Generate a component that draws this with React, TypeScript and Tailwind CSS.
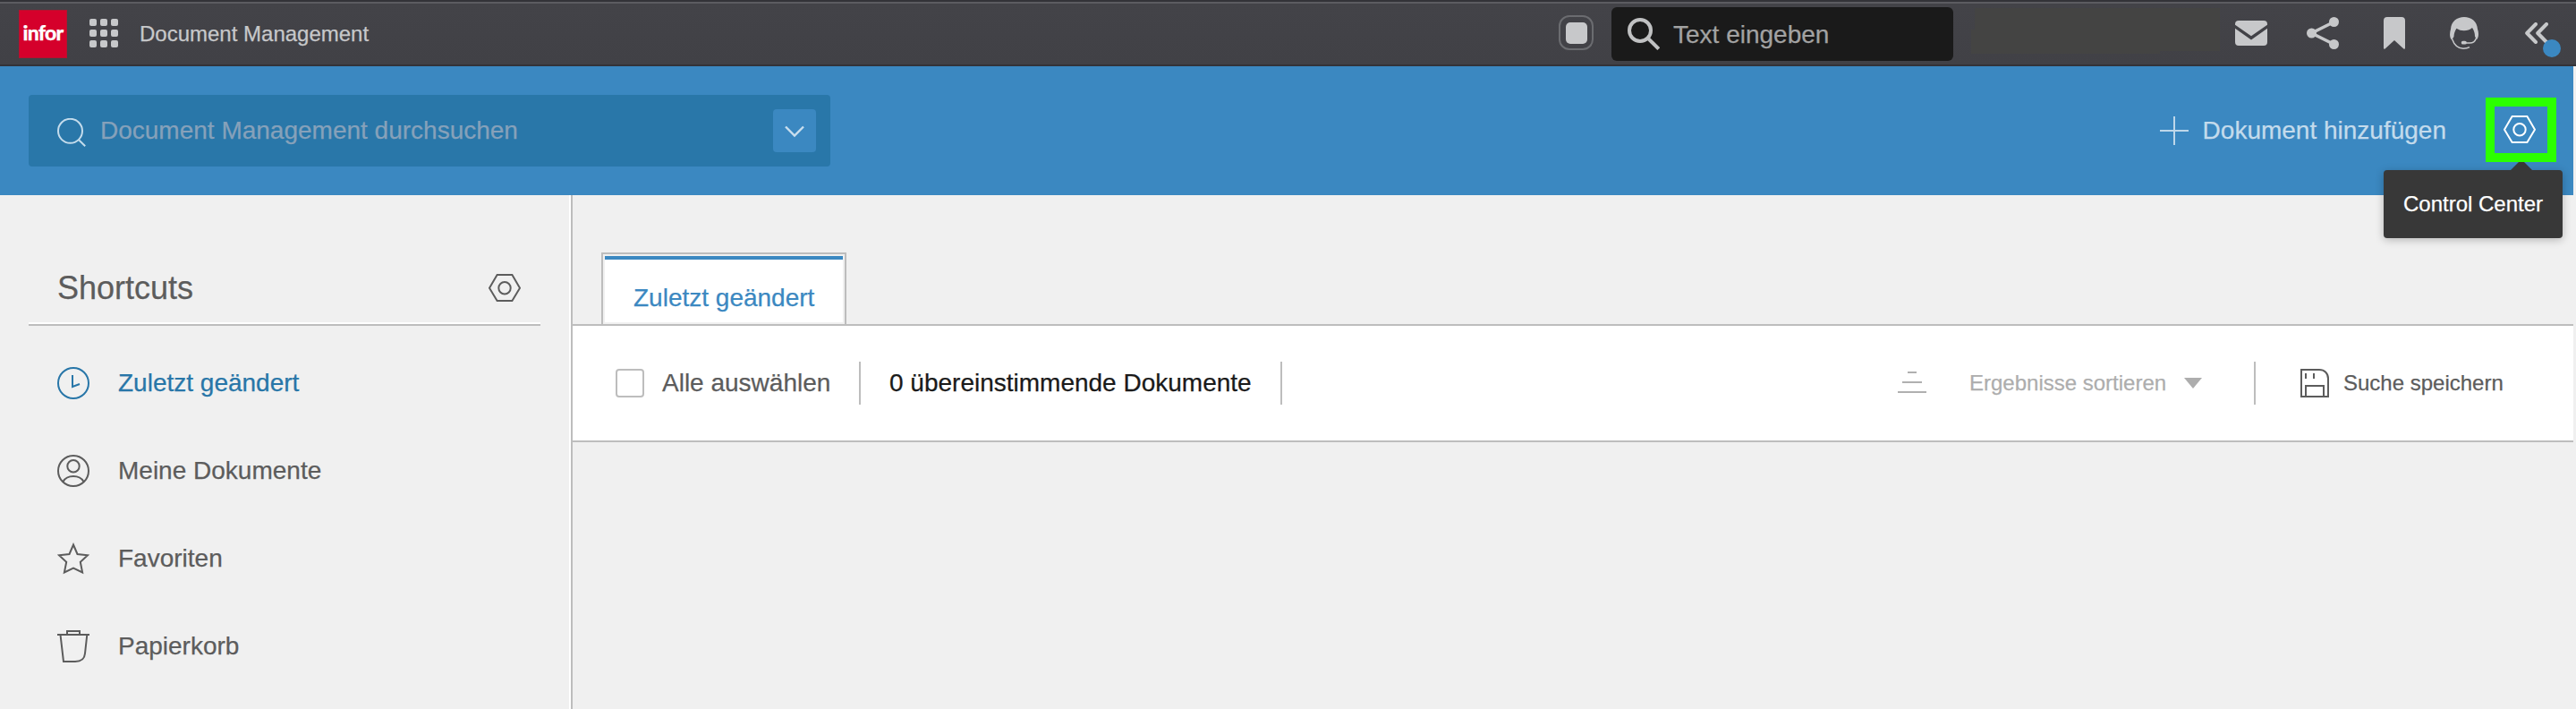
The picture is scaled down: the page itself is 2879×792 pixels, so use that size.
import type { ReactNode } from "react";

function HexNut({ className }: { className: string }) {
  return (
    <svg className={className} width="36" height="32" viewBox="0 0 36 32" fill="none" stroke="currentColor" strokeWidth="2">
      <path d="M9.6 1h16.8L35 15.8 26.4 30H9.6L1 15.8z" />
      <circle cx="18" cy="15.7" r="6.7" />
    </svg>
  );
}

function TopBar() {
  return (
    <header className="flex h-[74px] shrink-0 flex-col bg-[#333338]">
      <div className="mt-0.5 h-0.5 bg-[#5c5c61]" />
      <div className="flex h-[68px] items-start bg-gradient-to-b from-[#434348] to-[#414146]">
        <div className="ml-[21px] mt-[7px] flex h-[54px] w-[54px] items-center justify-center border border-[#b5122f] bg-[#d5002b]">
          <span className="mb-1 font-[Lato] text-[23px] font-black leading-none tracking-[-0.8px] text-white">infor</span>
        </div>
        <svg className="ml-[25px] mt-[17px]" width="32" height="32" viewBox="0 0 32 32" fill="#c7c8ca">
          {[0, 12, 24].map((y) =>
            [0, 12, 24].map((x) => <rect key={`${x}-${y}`} x={x} y={y} width="8" height="8" rx="2" />),
          )}
        </svg>
        <span className="ml-6 mt-[18px] whitespace-nowrap text-2xl leading-8 text-[#c7c8ca]">Document Management</span>

        <div className="ml-auto mt-[13px] flex h-[39px] w-[39px] items-center justify-center rounded-xl border-2 border-[#6b6c70]">
          <div className="h-6 w-6 rounded-[5px] bg-[#c7c8ca]" />
        </div>
        <div className="ml-5 mt-1 flex h-[60px] w-[382px] items-start rounded-md bg-[#1a1a1a]">
          <svg className="ml-[18px] mt-3" width="36" height="36" viewBox="0 0 36 36" fill="none" stroke="#c0c1c2" strokeWidth="4">
            <circle cx="14" cy="14" r="12" />
            <path d="M22.8 22.8 34.8 34.6" />
          </svg>
          <span className="ml-[15px] mt-[13px] whitespace-nowrap text-[28px] leading-9 text-[#a2a2a2]">Text eingeben</span>
        </div>
        <svg className="ml-5 mt-[5px]" width="278" height="51" viewBox="0 0 278 51" fill="#444443">
          <path d="M4 0h274v48h-67v3H0V24h4z" />
        </svg>

        <svg className="ml-[17px] mt-[19px]" width="36" height="28" viewBox="0 0 36 28" fill="#c7c8ca">
          <path d="M0 4Q0 0 4 0h28q4 0 4 4v.8L18 17.2 0 4.800z" />
          <path d="M0 8.800 18 21.600 36 8.800V24q0 4-4 4H4q-4 0-4-4z" />
        </svg>
        <svg className="ml-11 mt-[15px]" width="36" height="36" viewBox="0 0 36 36" fill="#c7c8ca" stroke="#c7c8ca">
          <path d="M30.500 5.500 5.500 18l25 12.500" fill="none" strokeWidth="3.600" />
          <circle cx="30.500" cy="5.500" r="5.500" stroke="none" />
          <circle cx="5.500" cy="18" r="5.500" stroke="none" />
          <circle cx="30.500" cy="30.500" r="5.500" stroke="none" />
        </svg>
        <svg className="ml-[50px] mt-[15px]" width="24" height="36" viewBox="0 0 24 36" fill="#c7c8ca">
          <path d="M0 4q0-4 4-4h16q4 0 4 4v30.500q0 1.800-1.600 1L12 26 1.600 35.500Q0 36.300 0 34.500z" />
        </svg>
        <svg className="ml-[50px] mt-[15px]" width="32" height="36" viewBox="0 0 32 36" fill="none" stroke="#c7c8ca">
          <path
            d="M2.200 25.500C-.5 23-.3 18 1 13.500 1.500 5 8 0 16 0s14.500 5 15 13.500C32.600 18 32.300 23 29.800 25.500L28 21.500c0-3.300-.9-6.500-3-9.500-4.500 4-12.500 4.300-17.500.7C5.500 15.500 4.700 18.500 4.500 22z"
            fill="#c7c8ca"
            stroke="none"
          />
          <path d="M2.500 24.500C5 31.500 9.500 35.200 15 35.200c2.800 0 4.800-.3 7-1.600" strokeWidth="1.500" />
          <path d="M29.300 24c-1.300 3.700-3.600 5-7 5H16" strokeWidth="1.500" />
          <rect x="12.800" y="26.700" width="6" height="3.900" rx="1.900" fill="#c7c8ca" stroke="none" />
        </svg>
        <div className="relative ml-[52px] mr-7 mt-[21px] h-6 w-[29px]">
          <svg width="29" height="24" viewBox="0 0 29 24" fill="none" stroke="#c7c8ca" strokeWidth="4" strokeLinecap="round" strokeLinejoin="round">
            <path d="M12 2 2.200 12 12 22M24 2 14.200 12 24 22" />
          </svg>
          <span className="absolute left-5 top-[19px] h-5 w-5 rounded-full bg-[#3b88c1]" />
        </div>
      </div>
    </header>
  );
}

function SearchBar() {
  return (
    <div className="mr-[3px] flex h-36 shrink-0 items-center bg-[#3b88c1] pl-8">
      <div className="flex h-20 w-[896px] items-center rounded bg-[#2977a9] pl-8 pr-4">
        <svg className="mt-1" width="32" height="32" viewBox="0 0 32 32" fill="none" stroke="#c4dcec" strokeWidth="2">
          <circle cx="14.500" cy="14.300" r="13.500" />
          <path d="M23.800 24 31.200 31.200" />
        </svg>
        <span className="ml-4 whitespace-nowrap text-[28px] leading-9 text-[#86a1ba]">Document Management durchsuchen</span>
        <div className="ml-auto flex h-12 w-12 items-center justify-center rounded bg-[#3b88c1]">
          <svg className="mt-0.5" width="22" height="14" viewBox="0 0 22 14" fill="none" stroke="#c9deee" strokeWidth="2.400">
            <path d="M1 1.500 11 11.500 21 1.500" />
          </svg>
        </div>
      </div>
      <svg className="ml-auto" width="32" height="32" viewBox="0 0 32 32" stroke="#bed7ea" strokeWidth="2">
        <path d="M16 0v32M0 16h32" />
      </svg>
      <span className="ml-[14px] w-[274px] whitespace-nowrap text-right text-[28px] leading-9 text-[#c4dbec]">Dokument hinzufügen</span>
      <div className="relative mb-0.5 ml-11 mr-[19px] h-[72px] w-[79px]">
        <div className="absolute -right-[7px] top-[81px] z-10 flex h-[76px] w-[200px] items-center justify-center rounded bg-[#383838] shadow-[0_2px_10px_rgba(0,0,0,0.25)]">
          <svg className="absolute -top-3 left-[142px]" width="24" height="12" viewBox="0 0 24 12" fill="#383838">
            <path d="M0 12 12 0l12 12z" />
          </svg>
          <span className="whitespace-nowrap text-2xl text-white">Control Center</span>
        </div>
        <div className="relative z-20 flex h-full w-full items-center border-10 border-[#2bff00] bg-[#3b88c1] pl-[10px]">
          <HexNut className="text-white" />
        </div>
      </div>
    </div>
  );
}

function Shortcut({ icon, label, active = false }: { icon: ReactNode; label: string; active?: boolean }) {
  return (
    <li className={active ? "flex h-[98px] items-center text-[#2876a8]" : "flex h-[98px] items-center text-[#5c5c5c]"}>
      <svg width="36" height="36" viewBox="0 0 36 36" fill="none" stroke="currentColor" strokeWidth="2">
        {icon}
      </svg>
      <span className="ml-8 whitespace-nowrap text-[28px] leading-9">{label}</span>
    </li>
  );
}

function Sidebar() {
  return (
    <aside className="flex w-[640px] shrink-0 flex-col border-r-2 border-[#bdbdbd]">
      <div className="flex flex-1 flex-col border-r-2 border-white pl-8 pr-8">
        <div className="flex h-36 items-start justify-between border-b-2 border-white pl-8 pr-[22px] pt-[84px]">
          <h2 className="text-4xl leading-10 text-[#5c5c5c]">Shortcuts</h2>
          <HexNut className="mt-1 text-[#5c5c5c]" />
        </div>
        <div className="h-0.5 shrink-0 bg-[#bdbdbd]" />
        <ul className="mt-[15px] pl-8">
          <Shortcut
            active
            label="Zuletzt geändert"
            icon={
              <>
                <circle cx="18" cy="18" r="17" />
                <path d="M17 9v13l8-3" />
              </>
            }
          />
          <Shortcut
            label="Meine Dokumente"
            icon={
              <>
                <circle cx="18" cy="18" r="17" />
                <circle cx="18" cy="12.700" r="6.700" />
                <path d="M6.500 30C8.800 26 12.500 24 18 24s9.200 2 11.500 6" />
              </>
            }
          />
          <Shortcut label="Favoriten" icon={<path d="M18 2.500 22.500 13 34 14.200 25.800 21.800l2.300 11.600L18 28.500 7.900 33.400 10.200 21.800 2 14.200 13.500 13z" />} />
          <Shortcut
            label="Papierkorb"
            icon={<path d="M0 5h36M11 5V1h14v4M3.500 5 7 35h13c6 0 10.500-3 11-9L33.300 5" />}
          />
        </ul>
      </div>
    </aside>
  );
}

function Divider({ className }: { className: string }) {
  return <div className={`h-12 w-0.5 shrink-0 bg-[#bdbdbd] ${className}`} />;
}

function Results() {
  return (
    <main className="mr-[3px] flex flex-1 flex-col">
      <div className="flex h-[146px] items-end border-b-2 border-[#bdbdbd] pl-8">
        <div className="h-20 w-[274px] border-2 border-b-0 border-[#bdbdbd] p-0.5">
          <div className="h-[74px] border-t-4 border-[#3b88c1] bg-white pl-8 pt-[25px]">
            <span className="block whitespace-nowrap text-[28px] leading-9 text-[#3b88c1]">Zuletzt geändert</span>
          </div>
        </div>
      </div>
      <div className="flex h-[130px] items-center border-b-2 border-[#bdbdbd] bg-white pl-12">
        <div className="h-8 w-8 rounded border-2 border-[#bdbdbd]" />
        <span className="ml-5 w-[188px] whitespace-nowrap text-[28px] leading-9 text-[#5c5c5c]">Alle auswählen</span>
        <Divider className="ml-8" />
        <span className="ml-8 w-[405px] whitespace-nowrap text-[28px] leading-9 text-[#1a1a1a]">0 übereinstimmende Dokumente</span>
        <Divider className="ml-8" />
        <svg className="ml-auto" width="32" height="32" viewBox="0 0 32 32" stroke="#b0b0b0" strokeWidth="2">
          <path d="M11 4h10M5 15h22M0 26h32" />
        </svg>
        <span className="ml-12 w-[220px] whitespace-nowrap text-2xl text-[#adadad]">Ergebnisse sortieren</span>
        <svg className="ml-5" width="20" height="12" viewBox="0 0 20 12" fill="#adadad">
          <path d="M0 0h20L10 12z" />
        </svg>
        <Divider className="ml-[58px]" />
        <svg className="ml-[50px]" width="32" height="32" viewBox="0 0 32 32" fill="none" stroke="#5c5c5c" strokeWidth="2">
          <path d="M1 1h20c6 0 10 4 10 10v20H1zM6 31V19h20v12M6 5v6M15 5v6" />
        </svg>
        <span className="ml-4 mr-[78px] w-[179px] whitespace-nowrap text-2xl text-[#5c5c5c]">Suche speichern</span>
      </div>
    </main>
  );
}

export default function App() {
  return (
    <div className="flex h-[792px] w-[2879px] flex-col overflow-hidden bg-[#f0f0f0] font-['Liberation_Sans',Arial,sans-serif] [-webkit-text-stroke:0.25px]">
      <TopBar />
      <SearchBar />
      <div className="flex flex-1">
        <Sidebar />
        <Results />
      </div>
    </div>
  );
}
